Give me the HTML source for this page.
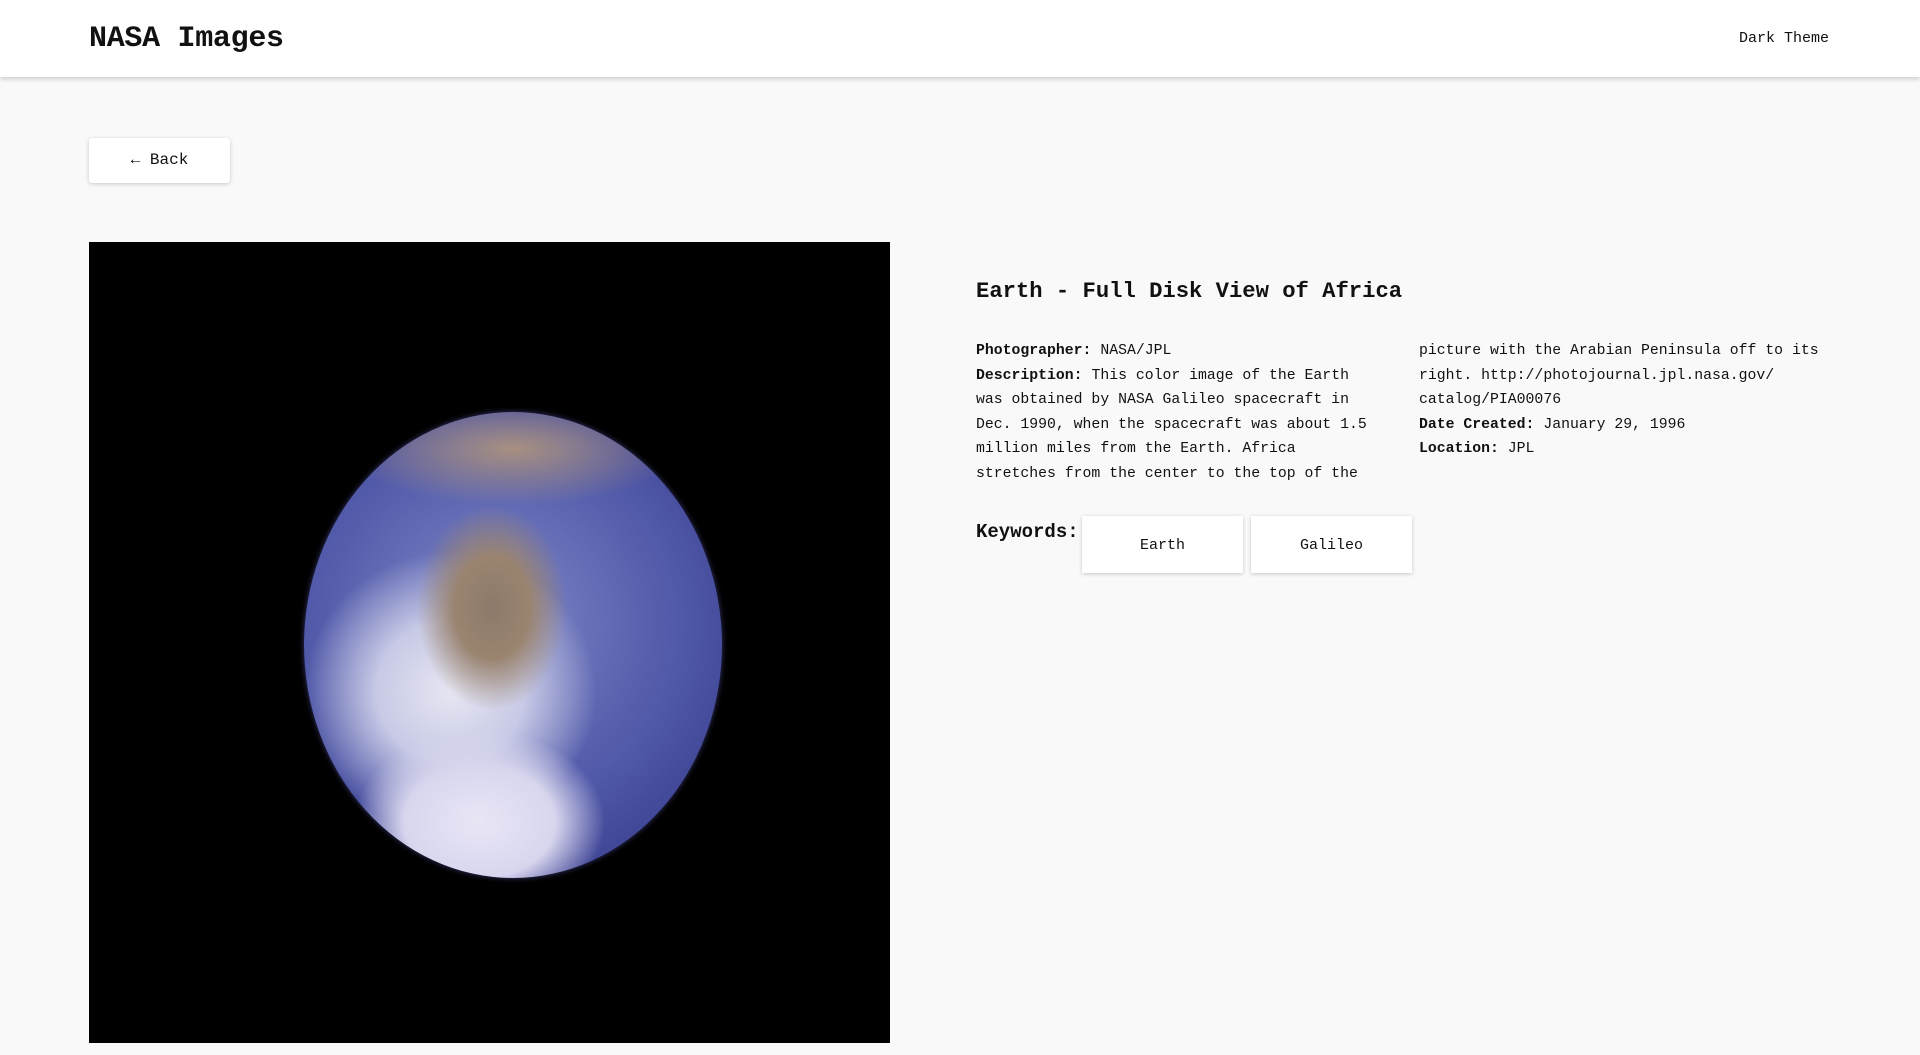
<!DOCTYPE html>
<html><head><meta charset="utf-8"><style>
*{margin:0;padding:0;box-sizing:border-box}
body{width:1920px;height:1055px;background:#f9f9f9;font-family:"Liberation Mono",monospace;color:#111;overflow:hidden;position:relative}
.hdr{position:absolute;left:0;top:0;width:1920px;height:77px;background:#fff;box-shadow:0 2px 5px rgba(0,0,0,.18)}
.logo{position:absolute;left:89px;top:22px;font-size:30px;font-weight:bold;letter-spacing:-0.3px}
.theme{position:absolute;right:91px;top:30px;font-size:15px}
.back{position:absolute;left:89px;top:138px;width:141px;height:45px;background:#fff;box-shadow:0 1px 4px rgba(0,0,0,.2);border-radius:3px;font-size:16px;line-height:45px;text-align:center}
.img{position:absolute;left:89px;top:242px;width:801px;height:801px;background:#000;overflow:hidden}
.earth{position:absolute;left:215px;top:170px;width:418px;height:466px;border-radius:50%;
background:
radial-gradient(ellipse 30% 20% at 42% 88%,#e8e6f5 0%,#d8d6ee 60%,rgba(200,200,230,0) 100%),
radial-gradient(ellipse 18% 22% at 45% 42%,#8c7a6a 0%,#9a8470 50%,rgba(150,130,110,0) 100%),
radial-gradient(ellipse 40% 12% at 50% 8%,#a89080 0%,rgba(160,140,130,0) 100%),
radial-gradient(ellipse 35% 30% at 35% 60%,#e6e6f2 0%,#c8cae6 50%,rgba(180,185,220,0) 100%),
radial-gradient(circle at 45% 45%,#8088c8 0%,#5058a8 55%,#3a3e8e 85%,#24266a 100%);
box-shadow:0 0 6px rgba(90,90,180,.6)}
.title{position:absolute;left:976px;top:279px;font-size:22.2px;font-weight:bold}
.col{position:absolute;top:339px;font-size:14.8px;line-height:24.5px;white-space:pre}
.kw{position:absolute;left:976px;top:521px;font-size:19px;font-weight:bold}
.chip{position:absolute;top:516px;width:161px;height:57px;background:#fff;box-shadow:0 1px 4px rgba(0,0,0,.2);font-size:15px;line-height:59px;text-align:center}
</style></head><body>
<div class="hdr"><div class="logo">NASA Images</div><div class="theme">Dark Theme</div></div>
<div class="back">← Back</div>
<div class="img"><div class="earth"></div></div>
<div class="title">Earth - Full Disk View of Africa</div>
<div class="col" style="left:976px"><b>Photographer:</b> NASA/JPL
<b>Description:</b> This color image of the Earth
was obtained by NASA Galileo spacecraft in
Dec. 1990, when the spacecraft was about 1.5
million miles from the Earth. Africa
stretches from the center to the top of the</div>
<div class="col" style="left:1419px">picture with the Arabian Peninsula off to its
right. http://photojournal.jpl.nasa.gov/
catalog/PIA00076
<b>Date Created:</b> January 29, 1996
<b>Location:</b> JPL</div>
<div class="kw">Keywords:</div>
<div class="chip" style="left:1082px">Earth</div>
<div class="chip" style="left:1251px">Galileo</div>
</body></html>
